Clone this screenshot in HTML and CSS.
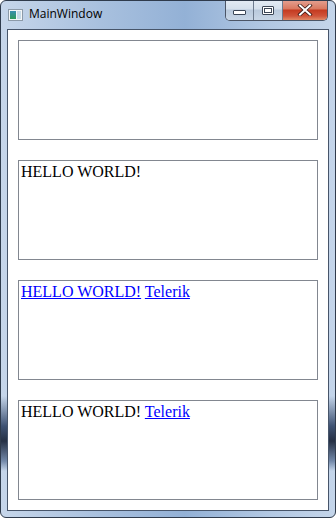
FILE: index.html
```html
<!DOCTYPE html>
<html>
<head>
<meta charset="utf-8">
<link rel="stylesheet" href="styles.css">
</head>
<body>
<div class="window">
  <div class="titlebar">
    <div class="appicon"><span class="ic-a"></span><span class="ic-b"></span></div>
    <div class="title">MainWindow</div>
    <div class="caption">
      <div class="cbtn min"><span class="glyph-min"></span></div>
      <div class="cbtn max"><span class="glyph-max"></span></div>
      <div class="cbtn close">
        <svg width="16" height="12" viewBox="0 0 16 12"><path d="M3 1.5 L13 10.5 M13 1.5 L3 10.5" stroke="#3a1a16" stroke-width="3.6" stroke-linecap="square"/><path d="M3 1.5 L13 10.5 M13 1.5 L3 10.5" stroke="#ffffff" stroke-width="2" stroke-linecap="square"/></svg>
      </div>
    </div>
  </div>
  <div class="client">
    <div class="box"></div>
    <div class="box">HELLO WORLD!</div>
    <div class="box"><a href="#" class="link">HELLO WORLD!</a> <a href="#" class="link">Telerik</a></div>
    <div class="box">HELLO WORLD! <a href="#" class="link">Telerik</a></div>
  </div>
</div>
</body>
</html>
```
FILE: styles.css
```css
html, body {
  margin: 0;
  padding: 0;
  background: #ffffff;
}
.window {
  box-sizing: border-box;
  width: 336px;
  height: 518px;
  border: 1px solid #2f3b4c;
  border-radius: 6px;
  background:
    linear-gradient(to bottom, rgba(0,0,0,0) 0, rgba(0,0,0,0) 395px, rgba(40,60,95,0.85) 425px, rgba(20,30,50,0.9) 440px, rgba(60,85,125,0.6) 460px, rgba(0,0,0,0) 470px),
    linear-gradient(to right, #c6d6ea 0, #a8c0de 30%, #93b1d6 55%, #b2c8e3 80%, #c4d5ea 100%);
  padding: 0 6px 6px 6px;
  display: flex;
  flex-direction: column;
  overflow: hidden;
  position: relative;
}
.titlebar {
  height: 28px;
  display: flex;
  align-items: flex-start;
  position: relative;
}
.appicon {
  margin-top: 8px;
  margin-left: 1px;
  width: 15px;
  height: 12px;
  background: #f4f6f8;
  border: 1px solid #8c9aa8;
  box-sizing: border-box;
  display: flex;
  padding: 1px;
  gap: 1px;
}
.ic-a {
  width: 7px;
  background: linear-gradient(to bottom, #3a8fb0, #2e9a5a);
}
.ic-b {
  width: 4px;
  background: #c7dbe8;
}
.title {
  margin-left: 6px;
  margin-top: 5px;
  font-family: "Open Sans", "Noto Sans", sans-serif;
  font-size: 12px;
  line-height: 16px;
  color: #000000;
}
.caption {
  position: absolute;
  top: -1px;
  right: 1px;
  display: flex;
  height: 20px;
  border: 1px solid #4b5566;
  border-top: none;
  border-radius: 0 0 5px 5px;
  overflow: hidden;
  background: #c9d6e5;
}
.cbtn {
  height: 20px;
  display: flex;
  align-items: center;
  justify-content: center;
  box-sizing: border-box;
}
.min, .max {
  background: linear-gradient(to bottom, #e3ebf4 0, #d5e0ec 45%, #b9c9dc 50%, #c8d6e6 100%);
  border-right: 1px solid #6d7b8e;
}
.min {
  width: 28px;
}
.max {
  width: 29px;
}
.close {
  width: 44px;
  background: linear-gradient(to bottom, #e5a293 0, #d9785f 45%, #c43a20 50%, #d0543a 80%, #e08a66 100%);
}
.glyph-min {
  width: 11px;
  height: 3px;
  background: #ffffff;
  border: 1px solid #3b4656;
  border-radius: 1px;
  margin-top: 5px;
}
.glyph-max {
  box-sizing: border-box;
  border: 1px solid #3b4656;
  border-radius: 1px;
  background: #ffffff;
  box-shadow: inset 0 0 0 1px #ffffff, inset 0 0 0 2px #3b4656;
  width: 12px;
  height: 9px;
}
.client {
  flex: 1;
  background: #ffffff;
  border: 1px solid #47556a;
  padding: 10px;
  display: flex;
  flex-direction: column;
  gap: 20px;
}
.box {
  box-sizing: border-box;
  height: 100px;
  border: 1px solid #828790;
  padding: 2px 2px 1px 2px;
  font-family: "Liberation Serif", "Times New Roman", serif;
  font-size: 16px;
  color: #000000;
  line-height: 18px;
}
.link {
  color: #0000ff;
  text-decoration: underline;
}
```
